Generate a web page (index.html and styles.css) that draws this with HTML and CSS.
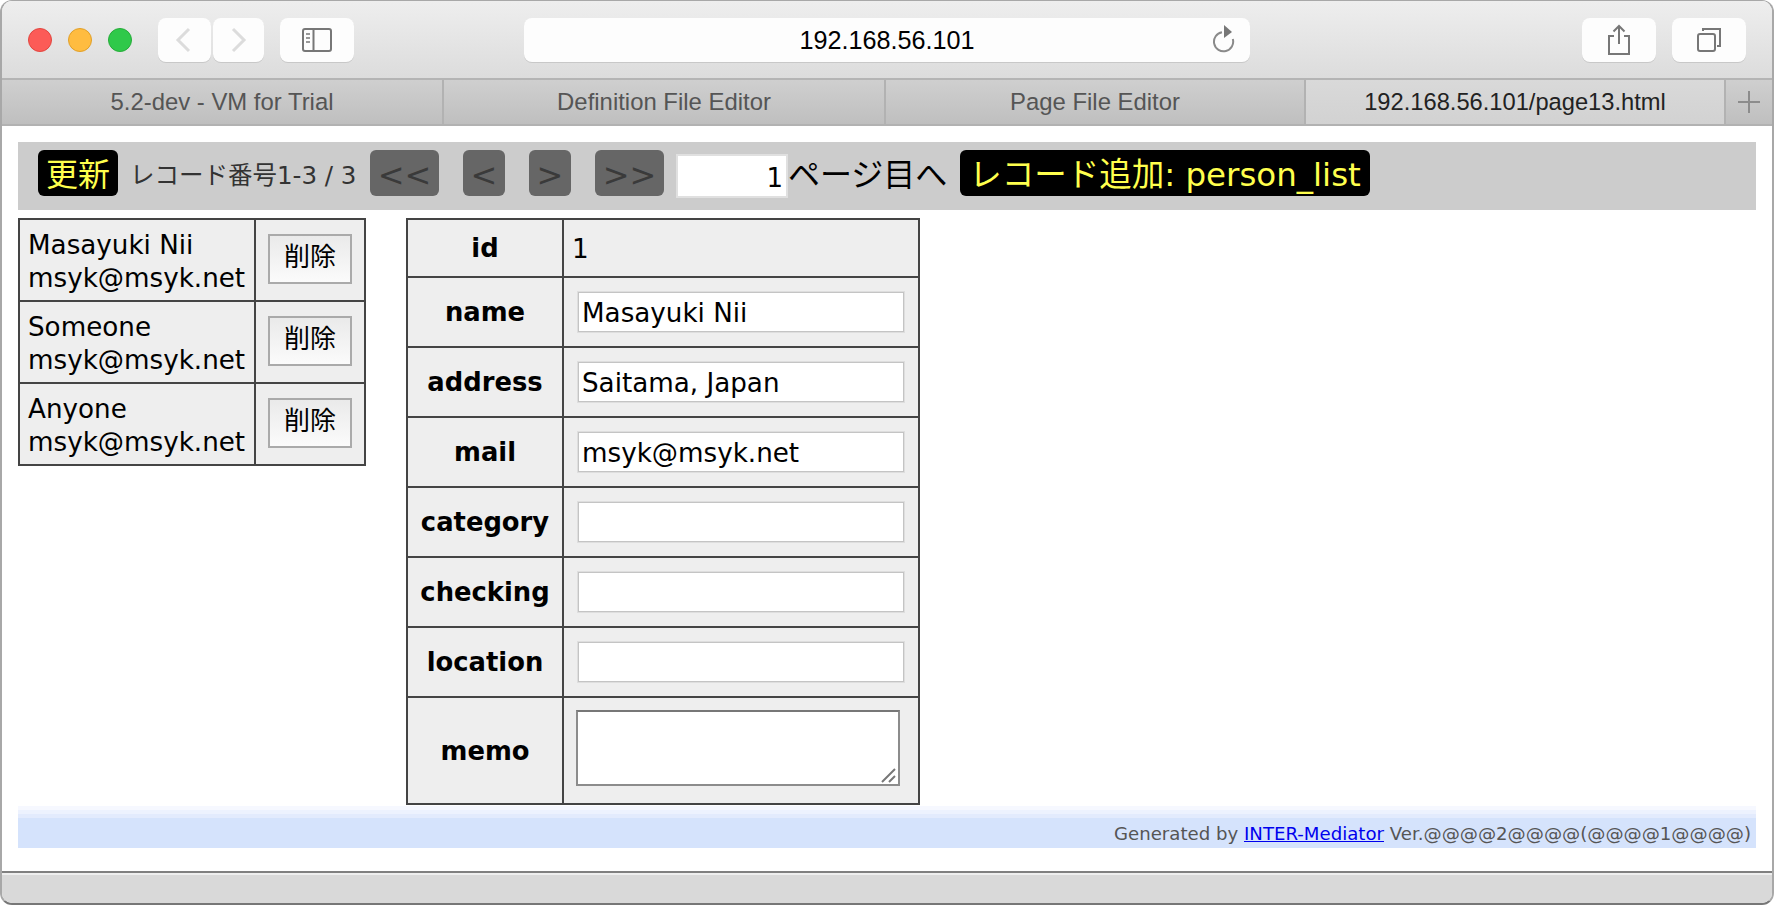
FILE: index.html
```html
<!DOCTYPE html>
<html lang="ja">
<head>
<meta charset="utf-8">
<title>192.168.56.101/page13.html</title>
<link rel="stylesheet" href="styles.css">
</head>
<body>
<div class="window">
  <header class="toolbar">
    <span class="light red"></span>
    <span class="light yellow"></span>
    <span class="light green"></span>
    <div class="tool back"><svg width="16" height="26" viewBox="0 0 16 26"><path d="M14 2 3 13l11 11" fill="none" stroke="#dcdcdc" stroke-width="3"/></svg></div>
    <div class="tool forward"><svg width="16" height="26" viewBox="0 0 16 26"><path d="M2 2l11 11L2 24" fill="none" stroke="#dcdcdc" stroke-width="3"/></svg></div>
    <div class="tool sidebar"><svg width="30" height="24" viewBox="0 0 30 24"><rect x="1" y="1" width="28" height="22" rx="2" fill="none" stroke="#777" stroke-width="2"/><path d="M11.500 1v22" stroke="#777" stroke-width="2"/><path d="M4 6h4M4 10h4M4 14h4" stroke="#999" stroke-width="2"/></svg></div>
    <div class="address">
      <span>192.168.56.101</span>
      <svg class="reload" width="24" height="28" viewBox="0 0 24 28"><path d="M10 7.200A9.600 9.600 0 1 0 20.800 14" fill="none" stroke="#8a8a8a" stroke-width="2"/><path d="M12 0l8 7-8 6z" fill="#777"/></svg>
    </div>
    <div class="tool share"><svg width="24" height="32" viewBox="0 0 24 32"><path d="M7 12H2v18h20V12h-5" fill="none" stroke="#777" stroke-width="2"/><path d="M12 2v18M6.500 7.500 12 2l5.500 5.500" fill="none" stroke="#777" stroke-width="2"/></svg></div>
    <div class="tool tabs-btn"><svg width="24" height="24" viewBox="0 0 24 24"><rect x="1" y="6" width="17" height="17" rx="2" fill="none" stroke="#777" stroke-width="2"/><path d="M6 3V1h17v17h-3" fill="none" stroke="#777" stroke-width="2"/></svg></div>
  </header>
  <nav class="tabbar">
    <div class="tab">5.2-dev - VM for Trial</div>
    <div class="tab">Definition File Editor</div>
    <div class="tab">Page File Editor</div>
    <div class="tab active">192.168.56.101/page13.html</div>
    <div class="tab plus"><svg width="24" height="24" viewBox="0 0 24 24"><path d="M12 1v22M1 12h22" stroke="#8c8c8c" stroke-width="2"/></svg></div>
  </nav>
  <main class="content">
    <div class="navibar">
      <button class="btn-black refresh" type="button">更新</button>
      <span class="count">レコード番号1-3 / 3</span>
      <button class="btn-grey first" type="button">&lt;&lt;</button>
      <button class="btn-grey prev" type="button">&lt;</button>
      <button class="btn-grey next" type="button">&gt;</button>
      <button class="btn-grey last" type="button">&gt;&gt;</button>
      <input class="page-input" type="text" value="1">
      <span class="page-label">ページ目へ</span>
      <button class="btn-black add" type="button">レコード追加: person_list</button>
    </div>
    <div class="panels">
      <table class="list">
        <tr>
          <td class="who">Masayuki Nii<br>msyk@msyk.net</td>
          <td class="act"><button class="del" type="button">削除</button></td>
        </tr>
        <tr>
          <td class="who">Someone<br>msyk@msyk.net</td>
          <td class="act"><button class="del" type="button">削除</button></td>
        </tr>
        <tr>
          <td class="who">Anyone<br>msyk@msyk.net</td>
          <td class="act"><button class="del" type="button">削除</button></td>
        </tr>
      </table>
      <table class="detail">
        <tr class="row-id"><th>id</th><td class="plain">1</td></tr>
        <tr><th>name</th><td><input class="field" type="text" value="Masayuki Nii"></td></tr>
        <tr><th>address</th><td><input class="field" type="text" value="Saitama, Japan"></td></tr>
        <tr><th>mail</th><td><input class="field" type="text" value="msyk@msyk.net"></td></tr>
        <tr><th>category</th><td><input class="field" type="text"></td></tr>
        <tr><th>checking</th><td><input class="field" type="text"></td></tr>
        <tr><th>location</th><td><input class="field" type="text"></td></tr>
        <tr class="row-memo"><th>memo</th><td class="memo-cell"><div class="memo-wrap"><textarea class="memo"></textarea><svg class="grip" width="16" height="16" viewBox="0 0 16 16"><path d="M1 15 14 2M8 15l6-6" stroke="#777" stroke-width="2"/></svg></div></td></tr>
      </table>
    </div>
    <footer class="credit">Generated by <a href="#">INTER-Mediator</a> Ver.@@@@2@@@@(@@@@1@@@@)</footer>
  </main>
  <div class="statusbar"></div>
</div>
</body>
</html>
```
FILE: styles.css
```css
* { box-sizing: border-box; }
html, body { margin: 0; padding: 0; background: #fff; height: 100%; overflow: hidden; }
body { font-family: "DejaVu Sans", "Noto Sans CJK JP", sans-serif; color: #000; }

.window {
  width: 1774px;
  height: 905px;
  display: flex;
  flex-direction: column;
  border: 2px solid #a8a8a8;
  border-bottom-color: #777;
  border-top-width: 1px;
  border-radius: 12px;
  overflow: hidden;
}

/* toolbar */
.toolbar {
  height: 77px;
  flex: none;
  display: flex;
  align-items: flex-start;
  padding: 17px 26px 0;
  background: linear-gradient(#eeeeee, #dcdcdc);
  font-family: "Liberation Sans", sans-serif;
}
.light { width: 24px; height: 24px; border-radius: 50%; margin-top: 10px; margin-right: 16px; border: 1px solid; }
.red { background: #fc5b57; border-color: #e2463f; }
.yellow { background: #ffbc40; border-color: #e1a029; }
.green { background: #2fc94a; border-color: #26ac39; }
.tool {
  height: 44px;
  background: #fdfdfd;
  border-radius: 8px;
  box-shadow: 0 1px 0 #c8c8c8;
  display: flex;
  align-items: center;
  justify-content: center;
}
.back { width: 53px; margin-left: 10px; padding-right: 4px; }
.forward { width: 51px; margin-left: 2px; }
.sidebar { width: 74px; margin-left: 16px; }
.address {
  position: relative;
  width: 726px;
  height: 44px;
  margin-left: 170px;
  background: #fdfdfd;
  border-radius: 8px;
  box-shadow: 0 1px 0 #c8c8c8;
  display: flex;
  align-items: center;
  justify-content: center;
  font-size: 25.200px;
  color: #000;
}
.reload { position: absolute; right: 14px; top: 7px; }
.share { width: 74px; margin-left: auto; }
.tabs-btn { width: 74px; margin-left: 16px; }

/* tab strip */
.tabbar {
  height: 48px;
  flex: none;
  display: grid;
  grid-template-columns: 442px 442px 420px 420px 1fr;
  border-top: 2px solid #b4b4b4;
  border-bottom: 2px solid #b2b2b2;
  background: linear-gradient(#cfcfcf, #bfbfbf);
  font-family: "Liberation Sans", sans-serif;
}
.tab {
  display: flex;
  align-items: center;
  justify-content: center;
  font-size: 23.900px;
  color: #555;
  border-right: 2px solid #b2b2b2;
}
.tab.active { background: linear-gradient(#d9d9d9, #d2d2d2); color: #222; font-size: 23.700px; }
.tab.plus { border-right: 0; }

/* page */
.content {
  flex: 1;
  background: #fff;
  padding: 16px 16px 0;
  min-height: 0;
}
.navibar {
  height: 68px;
  background: #ccc;
  padding: 8px 20px 0;
  display: flex;
  align-items: flex-start;
}
button { font-family: inherit; margin: 0; cursor: pointer; }
.btn-black {
  height: 46px;
  padding: 4px 0 0;
  background: #000;
  color: #ffff4d;
  border: 0;
  border-radius: 6px;
  font-size: 32px;
  line-height: 42px;
  white-space: nowrap;
}
.refresh { width: 80px; }
.add { width: 410px; margin-left: 14px; font-size: 32.500px; }
.count { margin-left: 12px; width: 227px; font-size: 24.500px; line-height: 52px; color: #333; white-space: nowrap; }
.btn-grey {
  height: 46px;
  padding: 4px 0 0;
  background: #666;
  color: #3a3a3a;
  border: 0;
  border-radius: 6px;
  font-size: 32px;
  line-height: 42px;
  white-space: nowrap;
}
.first { width: 69px; margin-left: 13px; }
.prev { width: 42px; margin-left: 24px; }
.next { width: 42px; margin-left: 24px; }
.last { width: 69px; margin-left: 24px; }
.page-input {
  width: 112px;
  height: 44px;
  margin: 4px 0 0 12px;
  padding: 4px 3px 0;
  border: 2px solid #e0e0e0;
  background: #fff;
  text-align: right;
  font: 26px "DejaVu Sans", sans-serif;
  color: #000;
}
.page-label { margin-left: 0; width: 158px; font-size: 32px; line-height: 51px; white-space: nowrap; }

.panels { display: flex; align-items: flex-start; gap: 40px; margin-top: 8px; }
table { border-collapse: collapse; background: #eee; font-size: 26.200px; }
td, th { border: 2px solid #444; padding: 0; }

.list { width: 348px; table-layout: fixed; }
.who { width: 236px; height: 82px; padding: 3px 8px 0; line-height: 33px; white-space: nowrap; }
.act { text-align: center; padding-bottom: 2px; }
.del {
  display: block;
  width: 84px;
  height: 50px;
  margin: 0 auto;
  padding: 0 0 10px;
  border: 2px solid #aaa;
  background: linear-gradient(#eaeaea, #fbfbfb);
  font-size: 26px;
  color: #000;
}

.detail { width: 514px; table-layout: fixed; }
.detail th { width: 156px; height: 70px; padding-top: 0; font-size: 25.800px; font-weight: bold; text-align: center; white-space: nowrap; }
.detail td { padding: 0 13px; }
.detail .plain { padding: 2px 8px 0; }
.detail .row-id th { height: 58px; }
.detail .row-memo th { height: 107px; }
.field {
  display: block;
  width: 326px;
  height: 40px;
  margin: 1px;
  padding: 2px 3px 0;
  border: 1px solid #c4c4c4;
  box-shadow: 0 0 0 1px #dedede;
  background: #fff;
  font: 26.200px "DejaVu Sans", sans-serif;
  color: #000;
}
.detail .memo-cell { padding: 0 13px 6px 12px; }
.memo-wrap { position: relative; width: 324px; height: 76px; }
.memo {
  display: block;
  width: 324px;
  height: 76px;
  padding: 0;
  border: 2px solid #8c8c8c;
  border-top-color: #777;
  background: #fff;
  resize: none;
}
.grip { position: absolute; right: 3px; bottom: 3px; }

.credit {
  height: 42px;
  margin-top: 1px;
  padding: 15px 5px 0 0;
  text-align: right;
  font-size: 18.150px;
  line-height: 26px;
  color: #555;
  white-space: nowrap;
  background: linear-gradient(#f6f8ff 0 4px, #edf2fe 4px 8px, #e3ebfd 8px 12px, #d5e3fc 12px);
}
.credit a { color: #00e; }

.statusbar {
  height: 32px;
  flex: none;
  background: #d9d9d9;
  border-top: 2px solid #808080;
  box-shadow: inset 0 2px 0 #eee;
}
```
